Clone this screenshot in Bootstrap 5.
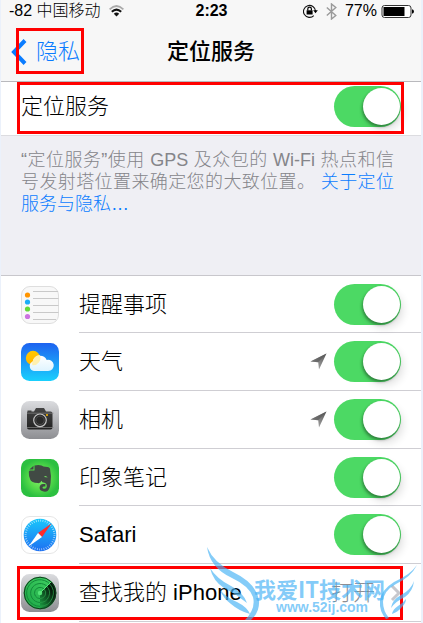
<!DOCTYPE html>
<html lang="zh-CN">
<head>
<meta charset="utf-8">
<meta name="viewport" content="width=device-width, initial-scale=1">
<title>定位服务</title>
<link href="https://cdn.jsdelivr.net/npm/bootstrap@5.3.0/dist/css/bootstrap.min.css" rel="stylesheet">
<style>
body{background:#ebf1fb;font-family:"Liberation Sans","Noto Sans CJK SC",sans-serif;color:#000;font-weight:300;overflow:hidden}
.screen{margin:0 2px 0 1px;background:#fff;min-height:100vh}
.top-area{background:#f7f7f7;border-bottom:1px solid #b9b9bd}
.status{font-size:16px;line-height:22px;padding:0 7px 0 8px;display:grid;grid-template-columns:1fr auto 1fr}
.title-bar{height:59px;display:grid;grid-template-columns:1fr auto 1fr;font-size:22px;padding:0 10px}
.title-bar h1{font-size:22px;font-weight:500;line-height:33px}
.back{color:#0a7cff;text-decoration:none;gap:9px}
.setting{padding:0 20px;font-size:22px;line-height:32px}
.master{height:54px;border-bottom:1px solid #dcdce0;padding-bottom:4px}
.note{background:#efeff4;height:140px;padding:13px 27px 0 20px;border-bottom:1px solid #c8c7cc;font-size:18px;line-height:22px;color:#85858a;text-align:justify}
.note a{color:#0a7cff;text-decoration:none}
.apps{list-style:none;margin:0;padding:0}
.app{height:58px;padding-left:20px;gap:20px}
.app:nth-child(3n+1){height:57px}
.app-icon{width:38px;height:38px;flex:none}
.app-line{border-bottom:1px solid #cfced3;font-size:22px;padding-right:20px;gap:7px;color:#000;text-decoration:none}
.toggle.form-check-input{width:67px;height:41px;margin:0;border:0;border-radius:21px;background:#4cd964;flex:none;float:none;position:relative;box-shadow:none}
.toggle.form-check-input::before{content:"";position:absolute;right:1px;top:2px;width:37px;height:37px;border-radius:50%;background:#fff;box-shadow:-1px 2px 3px rgba(0,0,0,.35),3px 5px 9px rgba(0,0,0,.12)}
.toggle.form-check-input:not(:checked){background:#e5e5ea}
.toggle.form-check-input:not(:checked)::before{right:28px}
.value{color:#8e8e93}
.frame{position:absolute;border:3px solid #f00;pointer-events:none}
.frame-back{left:15px;top:6px;width:68px;height:46px}
.frame-master{left:16px;right:17px;top:0;bottom:1px}
.frame-find{left:16px;right:18px;top:2px;bottom:2px}
.stamp{position:absolute;left:203px;top:-20px;pointer-events:none}
</style>
<script src="https://cdn.jsdelivr.net/npm/bootstrap@5.3.0/dist/js/bootstrap.bundle.min.js" defer></script>
</head>
<body>
<svg width="0" height="0" class="position-absolute" aria-hidden="true">
<defs>
<linearGradient id="arrowFill" x1="0" y1="1" x2="1" y2="0"><stop offset="0" stop-color="#bbb"/><stop offset="1" stop-color="#555"/></linearGradient>
<symbol id="arrow" viewBox="0 0 17 17"><path d="M.5 8.500L16.500.500 9 16.500 8.200 9.300z" fill="url(#arrowFill)"/><path d="M.5 8.500L16.500.500 8.200 9.300z" fill="#555" opacity=".6"/></symbol>
</defs>
</svg>
<main class="screen">
<header class="top-area">
<div class="status">
<div class="d-flex align-items-center gap-2"><span>-82 中国移动</span>
<svg width="15" height="12" viewBox="0 0 15 12" fill="none" aria-label="Wi-Fi"><path d="M.6 4.300Q7.500-2.300 14.400 4.300" stroke="#aaa" stroke-width="1.800"/><path d="M2.800 6.800Q7.500 2.400 12.200 6.800" stroke="#111" stroke-width="2"/><path d="M4.800 8.800Q7.500 6.400 10.200 8.800L7.500 11.600z" fill="#111"/></svg></div>
<span class="fw-bold">2:23</span>
<div class="d-flex align-items-center justify-content-end">
<svg width="15" height="14" viewBox="0 0 15 14" class="me-2" aria-label="方向锁定"><path d="M10.800 11.600A6 6 0 1 1 12.500 7" fill="none" stroke="#111" stroke-width="1.100"/><path d="M10.200 6.300h4.600l-2.300 3z"/><rect x="3.600" y="6.300" width="6" height="4.200"/><path d="M4.800 6.500V5a1.800 1.800 0 0 1 3.600 0v1.500" fill="none" stroke="#000" stroke-width="1.200"/></svg>
<svg width="11" height="17" viewBox="0 0 11 17" class="me-2" fill="none" stroke="#9a9a9a" stroke-width="1.400" aria-label="蓝牙"><path d="M.8 4.500l9 8L5.500 16V1l4.300 3.500-9 8"/></svg>
<span>77%</span>
<svg width="33" height="13" viewBox="0 0 33 13" class="ms-1" aria-label="电池"><rect x="1" y=".5" width="29" height="12" rx="2.500" fill="#fff" stroke="#333"/><path d="M2.500 2h21v9h-21z"/><path d="M31 4.300q2 .5 2 2.200t-2 2.200z"/></svg>
</div>
</div>
<div class="title-bar align-items-center position-relative">
<a href="#" class="back d-flex align-items-center"><svg width="16" height="26" viewBox="0 0 16 26" fill="none" stroke="#0a7cff" stroke-width="4"><path d="M14 1.500L3 13l11 11.500"/></svg><span>隐私</span></a>
<h1 class="m-0">定位服务</h1>
<div class="frame frame-back"></div>
</div>
</header>
<section class="setting master d-flex align-items-center justify-content-between position-relative">
<label for="t0">定位服务</label>
<input class="toggle form-check-input" type="checkbox" role="switch" id="t0" checked>
<div class="frame frame-master"></div>
</section>
<div class="note">“定位服务”使用 GPS 及众包的 Wi-Fi 热点和信号发射塔位置来确定您的大致位置。 <a href="#">关于定位服务与隐私…</a></div>
<ul class="apps">
<li class="app d-flex align-items-center">
<svg class="app-icon" viewBox="0 0 38 38"><rect x=".5" y=".5" width="37" height="37" rx="8.500" fill="#f8f8f8" stroke="#dedede"/><path d="M12 5.500h25M12 12.500h25.500M12 19.500h25.500M12 26.500h25.500M12 33.500h23" stroke="#c9c9c9"/><circle cx="6.500" cy="9" r="2.600" fill="#ff9500"/><circle cx="6.500" cy="16" r="2.600" fill="#1badf8"/><circle cx="6.500" cy="23" r="2.600" fill="#63da38"/><circle cx="6.500" cy="30.500" r="2.600" fill="#cc73e1"/></svg>
<div class="app-line d-flex align-items-center flex-fill h-100"><label for="t1" class="me-auto">提醒事项</label><input class="toggle form-check-input" type="checkbox" role="switch" id="t1" checked></div>
</li>
<li class="app d-flex align-items-center">
<svg class="app-icon" viewBox="0 0 38 38"><defs><linearGradient id="sky" x2="0" y2="1"><stop stop-color="#1d62f0"/><stop offset="1" stop-color="#1ad0fd"/></linearGradient><linearGradient id="sun" x2="0" y2="1"><stop stop-color="#ffc800"/><stop offset="1" stop-color="#ffb400"/></linearGradient><linearGradient id="cloud" x2="0" y2="1"><stop stop-color="#fff"/><stop offset="1" stop-color="#dff4ff"/></linearGradient></defs><rect width="38" height="38" rx="8.500" fill="url(#sky)"/><circle cx="12" cy="15" r="7.200" fill="url(#sun)"/><path d="M13 28a5 5 0 0 1-1.300-9.500 7.500 7.500 0 0 1 14-1.500 5.600 5.600 0 1 1 1.300 11z" fill="url(#cloud)"/><path d="M11.700 18.500a7.500 7.500 0 0 1 7-6.500 7.200 7.200 0 0 1-7.300 10.200 5 5 0 0 1 .3-3.700z" fill="#fff0b0"/></svg>
<div class="app-line d-flex align-items-center flex-fill h-100"><label for="t2" class="me-auto">天气</label><svg width="17" height="17"><use href="#arrow"/></svg><input class="toggle form-check-input" type="checkbox" role="switch" id="t2" checked></div>
</li>
<li class="app d-flex align-items-center">
<svg class="app-icon" viewBox="0 0 38 38"><defs><linearGradient id="metal" x2="0" y2="1"><stop stop-color="#dbdcdf"/><stop offset="1" stop-color="#8d8e92"/></linearGradient><linearGradient id="camBody" x2="0" y2="1"><stop stop-color="#444"/><stop offset="1" stop-color="#222"/></linearGradient></defs><rect width="38" height="38" rx="8.500" fill="url(#metal)"/><path d="M6.500 10.500V9.500h4v1h2.500l2-3.500h8l2 3.500h4.500q2 0 2 2v14q0 2-2 2h-21.500q-2 0-2-2v-14q0-2 .5-2z" fill="url(#camBody)"/><path d="M6 12.200h26.500M6 26.500h26.500" stroke="#858585" stroke-width=".7"/><circle cx="19" cy="19.300" r="6.300" fill="#292929" stroke="#c5c5c5" stroke-width="1.200"/><circle cx="19" cy="19.300" r="4.200" fill="none" stroke="#555" stroke-width=".8"/><circle cx="26" cy="14" r="1" fill="#fb0"/></svg>
<div class="app-line d-flex align-items-center flex-fill h-100"><label for="t3" class="me-auto">相机</label><svg width="17" height="17"><use href="#arrow"/></svg><input class="toggle form-check-input" type="checkbox" role="switch" id="t3" checked></div>
</li>
<li class="app d-flex align-items-center">
<svg class="app-icon" viewBox="0 0 38 38"><defs><radialGradient id="leaf"><stop stop-color="#8bf26e"/><stop offset=".55" stop-color="#59dc4c"/><stop offset="1" stop-color="#2cc040"/></radialGradient></defs><rect width="38" height="38" rx="8.500" fill="url(#leaf)"/><path d="M13.500 6.500q4-1.200 7 0 2 1.300 4 1.300 4 .1 4.500 2 1.600 7 .6 14-.7 6.500-3 8.300-2.300 1.200-5.500 0-2.700-1.100-2.500-3.900.3-3 3.400-3.300h2.400v2.500h-1.700q-1.200.2-1.200 1.200 0 1.300 1.900 1.200 2.200 0 2.400-2.300.1-3.200-2.300-3.700-2.500-.2-3.200-2-.6 2.700-3.500 2.300-6.500-.5-7.500-3.300Q7.500 16.500 7.800 12.800q.2-1.300 1.500-1.300h3.700q.5 0 .5-.6z" fill="#414a44"/><path d="M8.300 10.600L12.500 6.700v3.900z" fill="#414a44"/><path d="M23 18q1.600-2.400 3.700.5-1.500-.5-3.700-.5z" fill="#71d95f"/></svg>
<div class="app-line d-flex align-items-center flex-fill h-100"><label for="t4" class="me-auto">印象笔记</label><input class="toggle form-check-input" type="checkbox" role="switch" id="t4" checked></div>
</li>
<li class="app d-flex align-items-center">
<svg class="app-icon" viewBox="0 0 38 38"><defs><linearGradient id="compass" x2="0" y2="1"><stop stop-color="#1ac7fb"/><stop offset="1" stop-color="#1d70f2"/></linearGradient></defs><rect x=".5" y=".5" width="37" height="37" rx="8.500" fill="#fff" stroke="#e6e6e6"/><circle cx="19" cy="19" r="16.300" fill="url(#compass)"/><circle cx="19" cy="19" r="14.400" fill="none" stroke="#fff" stroke-width="2" stroke-dasharray=".7 1.560" opacity=".7"/><path d="M30.500 7.500L17 17l4 4z" fill="#ff2b2b"/><path d="M7.500 30.500L17 17l4 4z" fill="#fff"/></svg>
<div class="app-line d-flex align-items-center flex-fill h-100"><label for="t5" class="me-auto">Safari</label><input class="toggle form-check-input" type="checkbox" role="switch" id="t5" checked></div>
</li>
<li class="app d-flex align-items-center position-relative">
<svg class="app-icon" viewBox="0 0 38 38"><defs><linearGradient id="radar" x1="0" y1="1" x2="1" y2="0"><stop stop-color="#1ba545"/><stop offset="1" stop-color="#42d463"/></linearGradient><linearGradient id="sweep" x1="0" y1="1" x2="1" y2="0"><stop stop-color="#1ba545"/><stop offset=".7" stop-color="#051a0b"/></linearGradient></defs><rect width="38" height="38" rx="8.500" fill="url(#metal)"/><circle cx="19" cy="19" r="16.300" fill="url(#radar)"/><path d="M19 19L30.500 7.500A16.300 16.300 0 0 1 19 35.300z" fill="url(#sweep)"/><g fill="none" stroke="#138a3a" stroke-width="1"><circle cx="19" cy="19" r="15.800" stroke="#123a1d"/><path d="M29 10.300A13.300 13.300 0 1 0 19 32.300M26.500 13A9.500 9.500 0 1 0 19 28.500M23 15A5.600 5.600 0 1 0 19 24.600"/></g><path d="M28.400 9.600A13.300 13.300 0 0 1 19 32.300M25.700 12.300A9.500 9.500 0 0 1 19 28.500M23 15A5.600 5.600 0 0 1 19 24.600" fill="none" stroke="#2a9a48" stroke-width=".8"/><circle cx="19" cy="19" r="2.200" fill="#54e376"/><path d="M19 19L30.500 7.500" stroke="#59e67a"/></svg>
<a href="#" class="app-line d-flex align-items-center flex-fill h-100"><span class="me-auto">查找我的 iPhone</span><span class="value me-2">打开</span><svg width="11" height="18" viewBox="0 0 11 18" fill="none" stroke="#c7c7cc" stroke-width="3"><path d="M2 2l7 7-7 7"/></svg></a>
<div class="frame frame-find"></div>
<svg class="stamp" width="216" height="77" viewBox="0 0 216 77" fill="#45b1f5" fill-opacity=".66"><path d="M3 3Q10 19 29 28 52 39 55 56 56 68 47 76L41 76Q52 65 49 53 45 42 28 34 6 24 3 3zM6 24Q13 35 27 42 39 48 43 59 32 50 20 44 9 37 6 24zM16 46Q23 54 33 58 43 63 46 70 35 67 27 60 19 54 16 46z"/><path d="M213 21Q207 33 192 40 179 47 179 58 179 67 185 74L182 75Q175 67 176 57 177 46 190 38 206 31 213 21zM210 37Q207 46 197 51 188 56 187 64 192 57 201 53 209 47 210 37zM202 55Q198 60 194 62 189 65 188 70 194 68 198 63 202 59 202 55z"/><text x="50" y="54" font-size="22" font-weight="700" font-family="Noto Sans CJK SC, sans-serif">我爱IT技术网</text><text x="72" y="68" font-size="14" font-weight="700" font-family="Liberation Sans, sans-serif">www.52ij.com</text></svg>
</li>
</ul>
</main>
</body>
</html>
